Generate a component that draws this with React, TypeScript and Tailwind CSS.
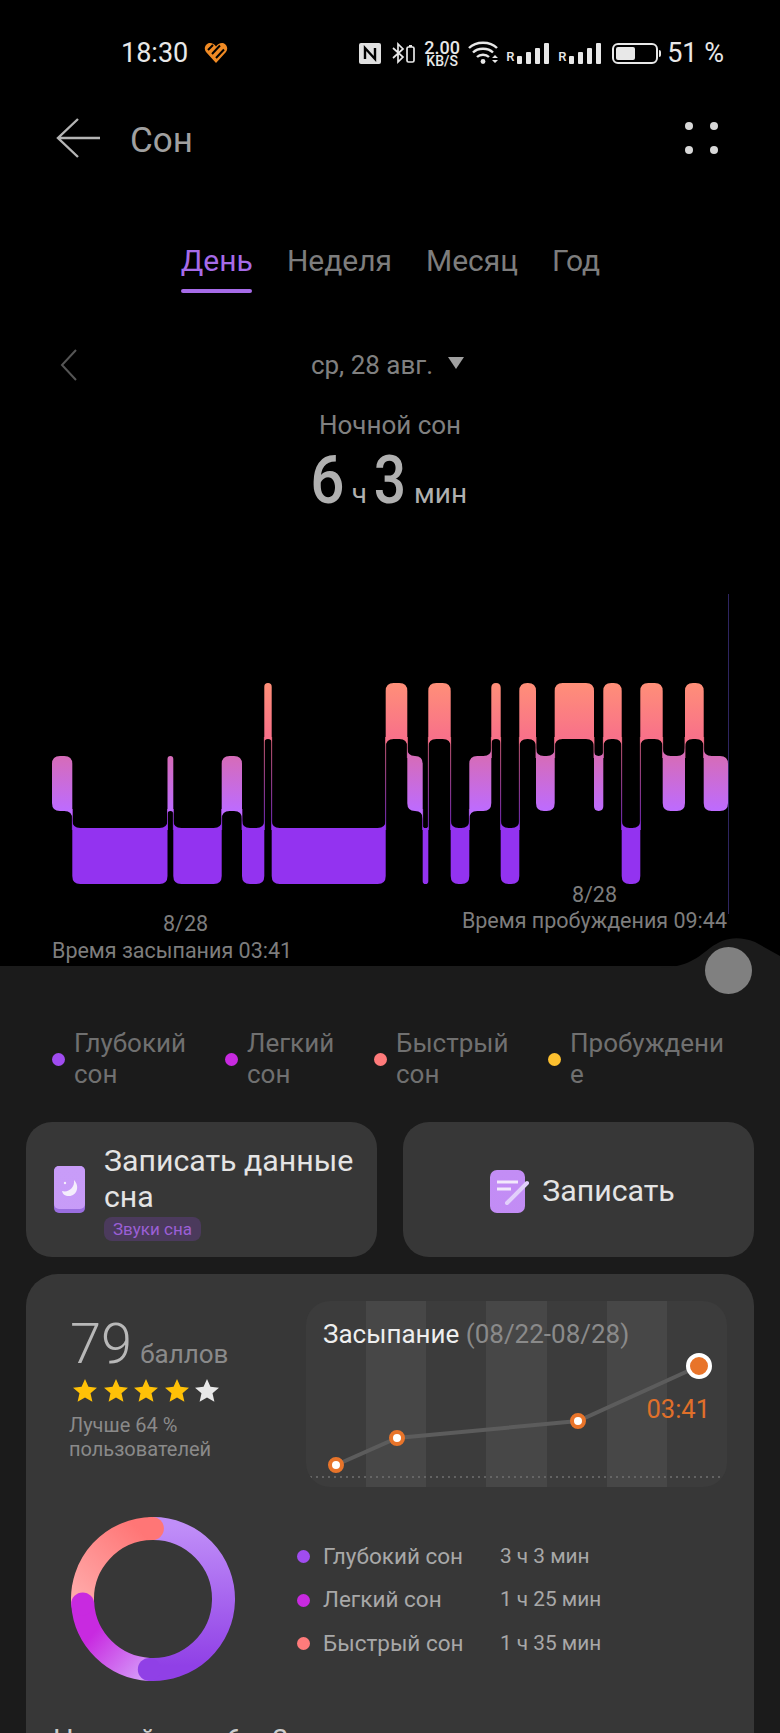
type Level = 'rem' | 'light' | 'deep';

const LEVELS: Record<Level, { top: number; bottom: number; fill: string }> = {
    rem: { top: 683, bottom: 739, fill: 'url(#remFill)' },
    light: { top: 756, bottom: 811, fill: 'url(#lightFill)' },
    deep: { top: 828, bottom: 884, fill: '#9333f0' },
};

const RANK: Record<Level, number> = { rem: 0, light: 1, deep: 2 };

// [level, x where the stretch ends], first stretch starts at x = 52
const STAGES: ReadonlyArray<[Level, number]> = [
    ['light', 72.3], ['deep', 167.5], ['light', 173.3], ['deep', 221.7], ['light', 242], ['deep', 264.3],
    ['rem', 271.7], ['deep', 385.7], ['rem', 407.3], ['light', 422.7], ['deep', 428.3], ['rem', 450.7],
    ['deep', 469.3], ['light', 491.3], ['rem', 500.7], ['deep', 519.3], ['rem', 536], ['light', 554.7],
    ['rem', 594], ['light', 603.3], ['rem', 621.7], ['deep', 640.3], ['rem', 662.7], ['light', 685],
    ['rem', 703.7], ['light', 728],
];

function stagePath(i: number) {
    const [level, x1] = STAGES[i];
    const x0 = i === 0 ? 52 : STAGES[i - 1][1];
    const { top, bottom } = LEVELS[level];
    const w = x1 - x0;
    const r = Math.min(8, w / 2);
    const f = Math.min(8, w / 2);
    const prev = i > 0 ? STAGES[i - 1][0] : null;
    const next = i < STAGES.length - 1 ? STAGES[i + 1][0] : null;
    const upL = prev !== null && RANK[prev] < RANK[level];
    const downL = prev !== null && RANK[prev] > RANK[level];
    const upR = next !== null && RANK[next] < RANK[level];
    const downR = next !== null && RANK[next] > RANK[level];
    const d: string[] = [];
    // top edge, left to right
    if (upL) d.push(`M${x0} ${top - f} Q${x0} ${top} ${x0 + f} ${top}`);
    else d.push(`M${x0} ${top + r} Q${x0} ${top} ${x0 + r} ${top}`);
    if (upR) d.push(`L${x1 - f} ${top} Q${x1} ${top} ${x1} ${top - f}`);
    else d.push(`L${x1 - r} ${top} Q${x1} ${top} ${x1} ${top + r}`);
    // bottom edge, right to left
    if (downR) d.push(`L${x1} ${bottom + f} Q${x1} ${bottom} ${x1 - f} ${bottom}`);
    else d.push(`L${x1} ${bottom - r} Q${x1} ${bottom} ${x1 - r} ${bottom}`);
    if (downL) d.push(`L${x0 + f} ${bottom} Q${x0} ${bottom} ${x0} ${bottom + f}`);
    else d.push(`L${x0 + r} ${bottom} Q${x0} ${bottom} ${x0} ${bottom - r}`);
    d.push('Z');
    return d.join(' ');
}

function SleepChart() {
    return (
        <svg width={780} height={400} viewBox="0 560 780 400" className="block">
            <defs>
                <linearGradient id="remFill" x1="0" y1="683" x2="0" y2="739" gradientUnits="userSpaceOnUse">
                    <stop offset="0" stopColor="#ff8f78" />
                    <stop offset="1" stopColor="#f8708a" />
                </linearGradient>
                <linearGradient id="lightFill" x1="0" y1="756" x2="0" y2="811" gradientUnits="userSpaceOnUse">
                    <stop offset="0" stopColor="#d66cb8" />
                    <stop offset="1" stopColor="#bd6bff" />
                </linearGradient>
                <linearGradient id="linkFill" x1="0" y1="739" x2="0" y2="828" gradientUnits="userSpaceOnUse">
                    <stop offset="0" stopColor="#f8708a" />
                    <stop offset="1" stopColor="#9333f0" />
                </linearGradient>
            </defs>
            <rect x={728} y={594} width={1} height={320} fill="#2e2560" />
            {STAGES.slice(0, -1).map(([level, x], i) => {
                const other = STAGES[i + 1][0];
                const a = RANK[level] < RANK[other] ? LEVELS[level] : LEVELS[other];
                const b = RANK[level] < RANK[other] ? LEVELS[other] : LEVELS[level];
                return <rect key={x} x={x - 0.4} y={a.bottom - 2} width={0.8} height={b.top - a.bottom + 4} fill="url(#linkFill)" />;
            })}
            {STAGES.map(([level, x], i) => (
                <path key={x} d={stagePath(i)} fill={LEVELS[level].fill} />
            ))}
        </svg>
    );
}

function polar(angle: number) {
    const a = ((angle - 90) * Math.PI) / 180;
    return { x: 82 + 70.5 * Math.cos(a), y: 83 + 70.5 * Math.sin(a) };
}

function arc(from: number, to: number) {
    const p = polar(from);
    const q = polar(to);
    return `M${p.x} ${p.y} A70.5 70.5 0 ${to - from > 180 ? 1 : 0} 1 ${q.x} ${q.y}`;
}

function Donut() {
    const capDeep = polar(183);
    const capLight = polar(266);
    const capRem = polar(359.5);
    return (
        <svg width={165} height={166} viewBox="0 0 165 166" className="shrink-0">
            <defs>
                <linearGradient id="ringDeep" x1="0" y1="10" x2="0" y2="150" gradientUnits="userSpaceOnUse">
                    <stop offset="0" stopColor="#c08ef8" />
                    <stop offset="1" stopColor="#9040e6" />
                </linearGradient>
                <linearGradient id="ringLight" x1="70" y1="160" x2="22" y2="118" gradientUnits="userSpaceOnUse">
                    <stop offset="0" stopColor="#d496f8" />
                    <stop offset="1" stopColor="#c82ae0" />
                </linearGradient>
                <linearGradient id="ringRem" x1="5" y1="85" x2="70" y2="15" gradientUnits="userSpaceOnUse">
                    <stop offset="0" stopColor="#ffabab" />
                    <stop offset="1" stopColor="#ff7676" />
                </linearGradient>
            </defs>
            <g fill="none" strokeWidth={23}>
                <path d={arc(0, 183)} stroke="url(#ringDeep)" />
                <path d={arc(183, 266)} stroke="url(#ringLight)" />
                <path d={arc(266, 359.5)} stroke="url(#ringRem)" />
            </g>
            <circle cx={capDeep.x} cy={capDeep.y} r={11.5} fill="#9040e6" />
            <circle cx={capLight.x} cy={capLight.y} r={11.5} fill="#c82ae0" />
            <circle cx={capRem.x} cy={capRem.y} r={11.5} fill="#ff7676" />
        </svg>
    );
}

function SignalBars() {
    return (
        <div className="flex items-end gap-[4px]">
            <span className="w-[9px] text-[13px] leading-[14px] font-medium text-[#e8e8e8]">R</span>
            <span className="ml-[-2px] h-[8px] w-[5px] rounded-[1px] bg-[#e8e8e8]" />
            <span className="h-[12px] w-[5px] rounded-[1px] bg-[#e8e8e8]" />
            <span className="h-[16px] w-[5px] rounded-[1px] bg-[#e8e8e8]" />
            <span className="h-[21px] w-[5px] rounded-[1px] bg-[#e8e8e8]" />
        </div>
    );
}

function StatusBar() {
    return (
        <div className="flex h-[105px] items-center pt-[1px] pr-[56px] pl-[121px] text-[#e8e8e8]">
            <span className="text-[27px] leading-none">18:30</span>
            <svg width={24} height={20} viewBox="0 0 24 20" className="ml-[16px]">
                <path d="M12 20 L2 9 C-1 5 2 0 6 0 C8.500 0 10.500 1.500 12 3.500 C13.500 1.500 15.500 0 18 0 C22 0 25 5 22 9 Z" fill="#f08a24" />
                <path d="M4 7 L9 2 M8 11 L16 2.500 M12 15 L20 6.500" stroke="#000" strokeWidth={2} />
            </svg>
            <div className="ml-auto flex items-center">
                <svg width={22} height={21} viewBox="0 0 22 21">
                    <rect width={22} height={21} rx={2} fill="#e0e0e0" />
                    <path d="M6 16 V5 L16 16 V5" fill="none" stroke="#000" strokeWidth={2.400} />
                </svg>
                <svg width={24} height={24} viewBox="0 0 24 24" className="ml-[11px]">
                    <path d="M1 7 L11 16 L6 21 V3 L11 8 L1 17" fill="none" stroke="#e8e8e8" strokeWidth={1.700} />
                    <rect x={15} y={6} width={7} height={15} rx={1.500} fill="none" stroke="#e8e8e8" strokeWidth={1.700} />
                    <rect x={17} y={4} width={3} height={2} fill="#e8e8e8" />
                </svg>
                <div className="ml-[8px] flex w-[36px] flex-col items-center font-medium">
                    <span className="text-[18px] leading-[15px]">2.00</span>
                    <span className="text-[14px] leading-[12px]">KB/S</span>
                </div>
                <svg width={31} height={24} viewBox="0 0 31 24" className="ml-[8px]">
                    <g fill="none" stroke="#e8e8e8" strokeWidth={2.400}>
                        <path d="M1 7 C8 0 22 0 29 7" />
                        <path d="M5 11.500 C10 6.500 20 6.500 25 11.500" />
                        <path d="M9 16 C12 13 18 13 21 16" />
                    </g>
                    <circle cx={15} cy={20.500} r={2.400} fill="#e8e8e8" />
                    <path d="M24 17 L27 14 L30 17 Z M24 19 L30 19 L27 22 Z" fill="#e8e8e8" />
                </svg>
                <div className="ml-[7px]">
                    <SignalBars />
                </div>
                <div className="ml-[9px]">
                    <SignalBars />
                </div>
                <div className="ml-[11px] flex items-center">
                    <div className="flex h-[21px] w-[46px] items-center rounded-[6px] border-2 border-[#e8e8e8] p-[2px]">
                        <div className="h-full w-[19px] rounded-[2px] bg-[#e8e8e8]" />
                    </div>
                    <div className="ml-[1px] h-[7px] w-[2px] rounded-r-sm bg-[#e8e8e8]" />
                </div>
                <span className="ml-[6px] text-[27px] leading-none">51 %</span>
            </div>
        </div>
    );
}

function Legend({ color, label }: { color: string; label: React.ReactNode }) {
    return (
        <div className="flex items-center">
            <span className={`size-[13px] shrink-0 rounded-full ${color}`} />
            <span className="ml-[9px] text-[26px] leading-[31px] text-[#707070]">{label}</span>
        </div>
    );
}

function Star({ color }: { color: string }) {
    return (
        <svg width={26} height={25} viewBox="0 0 24 24">
            <path d="M12 1 L15.300 8.500 L23.500 9.300 L17.300 14.700 L19.100 22.800 L12 18.600 L4.900 22.800 L6.700 14.700 L0.500 9.300 L8.700 8.500 Z" fill={color} />
        </svg>
    );
}

function Phase({ color, label, value }: { color: string; label: string; value: string }) {
    return (
        <div className="flex h-[43.500px] items-center">
            <span className={`size-[13px] rounded-full ${color}`} />
            <span className="ml-[13px] w-[177px] text-[22.500px] text-[#a8a8a8]">{label}</span>
            <span className="text-[20.800px] text-[#a8a8a8]">{value}</span>
        </div>
    );
}

export default function App() {
    return (
        <div className="relative h-[1733px] w-[780px] overflow-hidden bg-black font-['Roboto',sans-serif]">
            <StatusBar />

            {/* Title bar */}
            <div className="flex h-[66px] items-center pr-[62px] pl-[56px]">
                <svg width={44} height={40} viewBox="0 0 44 40" fill="none" stroke="#b5b5b5" strokeWidth={2.400} className="mt-[-1px]">
                    <path d="M22 1 L2 20 L22 39 M2 20 H44" />
                </svg>
                <span className="mt-[4px] ml-[30px] text-[35px] leading-none text-[#a0a0a0]">Сон</span>
                <div className="ml-auto grid grid-cols-2 gap-x-[17px] gap-y-[16px]">
                    <span className="size-[8px] rounded-full bg-[#d8d8d8]" />
                    <span className="size-[8px] rounded-full bg-[#d8d8d8]" />
                    <span className="size-[8px] rounded-full bg-[#d8d8d8]" />
                    <span className="size-[8px] rounded-full bg-[#d8d8d8]" />
                </div>
            </div>

            {/* Tabs */}
            <div className="mt-[70px] flex justify-center gap-[34px] pl-[1px] text-[30px] leading-[40px] text-[#7d7d7d]">
                <div className="flex flex-col items-center text-[#a66be8]">
                    <span>День</span>
                    <span className="mt-[8px] h-[4px] w-[71px] rounded-full bg-[#a66be8]" />
                </div>
                <span>Неделя</span>
                <span>Месяц</span>
                <span>Год</span>
            </div>

            {/* Date picker */}
            <div className="relative mt-[52px] flex h-[40px] items-center justify-center pr-[5px] text-[26px] text-[#808080]">
                <svg width={17} height={32} viewBox="0 0 17 32" fill="none" stroke="#555555" strokeWidth={2} className="absolute top-[4px] left-[60px]">
                    <path d="M16 1 L2 16 L16 31" />
                </svg>
                <span>ср, 28 авг.</span>
                <span className="mt-[-4px] ml-[15px] h-0 w-0 border-x-[8px] border-t-[12px] border-x-transparent border-t-[#a0a0a0]" />
            </div>

            <div className="mt-[23px] text-center text-[26px] leading-[34px] text-[#808080]">Ночной сон</div>
            <div className="mt-[6px] flex items-baseline justify-center text-[#b0b0b0]">
                <span className="flex w-[29px] scale-x-[.9] justify-center text-[67px] leading-[64px] font-medium">6</span>
                <span className="ml-[10px] text-[28px] leading-none">ч</span>
                <span className="ml-[10px] flex w-[26px] scale-x-[.85] justify-center text-[67px] leading-[64px] font-medium">3</span>
                <span className="ml-[11px] text-[28px] leading-none">мин</span>
            </div>

            {/* Hypnogram */}
            <div className="absolute top-[560px] left-0">
                <SleepChart />
            </div>
            <div className="absolute top-[882px] right-[53px] text-center text-[21.500px] leading-[26px] text-[#7d7d7d]">
                <div>8/28</div>
                <div>Время пробуждения 09:44</div>
            </div>
            <div className="absolute top-[910px] left-[52px] text-[21.500px] leading-[27px] text-[#7d7d7d]">
                <div className="pl-[27px] text-center">8/28</div>
                <div>Время засыпания 03:41</div>
            </div>

            {/* Bottom sheet */}
            <div className="absolute inset-x-0 top-[966px] bottom-0 bg-[#1b1b1b] px-[26px]">
                <svg width={125} height={32} viewBox="0 0 125 32" className="absolute top-[-30px] right-0">
                    <path d="M0 32 C30 32 40 24 55 12 C68 2 82 -1 100 6 L125 20 V32 Z" fill="#1b1b1b" />
                </svg>
                <span className="absolute top-[-19px] left-[705px] size-[47px] rounded-full bg-[#808080]" />

                <div className="grid grid-cols-[173px_149px_174px_1fr] pt-[62px] pl-[26px]">
                    <Legend color="bg-[#a04cf0]" label={<>Глубокий<br />сон</>} />
                    <Legend color="bg-[#c82ae0]" label={<>Легкий<br />сон</>} />
                    <Legend color="bg-[#ff7b7b]" label={<>Быстрый<br />сон</>} />
                    <Legend color="bg-[#fdc02f]" label={<>Пробуждени<br />е</>} />
                </div>

                <div className="mt-[32px] grid grid-cols-2 gap-[26px]">
                    <div className="flex h-[135px] items-center rounded-[26px] bg-[#373737] pl-[28px]">
                        <svg width={31} height={47} viewBox="0 0 31 47" className="shrink-0">
                            <defs>
                                <linearGradient id="phoneFill" x1="0" y1="0" x2="0" y2="47">
                                    <stop offset="0" stopColor="#c89cf8" />
                                    <stop offset="1" stopColor="#a87cf0" />
                                </linearGradient>
                            </defs>
                            <rect width={31} height={47} rx={5} fill="#9a6ee0" />
                            <rect width={31} height={43} rx={5} fill="url(#phoneFill)" />
                            <path d="M20 14 C26 20 23 30 15 30 C11 30 8.500 28 8 25 C14 27 21 22 20 14 Z" fill="#f4eefc" />
                            <circle cx={11} cy={17} r={1.200} fill="#f4eefc" />
                        </svg>
                        <div className="ml-[19px] pt-[4px]">
                            <div className="text-[30.300px] leading-[36px] text-[#e4e4e4]">Записать данные<br />сна</div>
                            <div className="mt-[2px] w-fit rounded-[8px] bg-[#4b3a5c] px-[9px] text-[17px] leading-[24px] text-[#9b5fd5]">Звуки сна</div>
                        </div>
                    </div>
                    <div className="flex h-[135px] items-center justify-center rounded-[26px] bg-[#373737] pt-[4px] pl-[8px]">
                        <svg width={39} height={43} viewBox="0 0 39 43">
                            <defs>
                                <linearGradient id="noteFill" x1="0" y1="0" x2="0" y2="43">
                                    <stop offset="0" stopColor="#c38df5" />
                                    <stop offset="1" stopColor="#9e6fe8" />
                                </linearGradient>
                            </defs>
                            <rect width={35} height={43} rx={7} fill="url(#noteFill)" />
                            <path d="M7 12 H28 M7 19 H21" stroke="#f2e8fc" strokeWidth={3} />
                            <path d="M37 13 L17 33" stroke="#e2cffb" strokeWidth={4} strokeLinecap="round" />
                        </svg>
                        <span className="ml-[13px] text-[30.300px] leading-none text-[#e4e4e4]">Записать</span>
                    </div>
                </div>

                {/* Score card */}
                <div className="mt-[17px] h-[600px] rounded-[32px] bg-[#373737] px-[27px] pt-[27px]">
                    <div className="flex">
                        <div className="w-[253px] pt-[12px] pl-[17px]">
                            <div className="flex items-baseline">
                                <span className="text-[56px] leading-[62px] font-light text-[#b8b8b8]">79</span>
                                <span className="ml-[8px] text-[26px] text-[#8a8a8a]">баллов</span>
                            </div>
                            <div className="mt-[3px] ml-[2px] flex gap-[4.500px]">
                                <Star color="#ffc107" />
                                <Star color="#ffc107" />
                                <Star color="#ffc107" />
                                <Star color="#ffc107" />
                                <Star color="#e8e8e8" />
                            </div>
                            <div className="mt-[10px] ml-[-1px] text-[20px] leading-[24px] text-[#8a8a8a]">Лучше 64 %<br />пользователей</div>
                        </div>
                        <div className="relative h-[186px] w-[421px] overflow-hidden rounded-[24px] bg-[#3c3c3c]">
                            <div className="absolute inset-0 grid grid-cols-7">
                                <span />
                                <span className="bg-[#474747]" />
                                <span />
                                <span className="bg-[#474747]" />
                                <span />
                                <span className="bg-[#474747]" />
                                <span />
                            </div>
                            <div className="relative pt-[18px] pl-[17px] text-[26px] leading-[30px]">
                                <span className="text-[#eeeeee]">Засыпание </span>
                                <span className="text-[#8a8a8a]">(08/22-08/28)</span>
                            </div>
                            <svg width={421} height={186} viewBox="0 0 421 186" className="absolute inset-0">
                                <line x1={4} y1={176} x2={417} y2={176} stroke="#707070" strokeWidth={1.500} strokeDasharray="2 4" />
                                <polyline points="30,164 91,137 272,120 393,65" fill="none" stroke="#5c5c5c" strokeWidth={4} />
                                <circle cx={30} cy={164} r={6} fill="#fff" stroke="#e8742a" strokeWidth={4} />
                                <circle cx={91} cy={137} r={6} fill="#fff" stroke="#e8742a" strokeWidth={4} />
                                <circle cx={272} cy={120} r={6} fill="#fff" stroke="#e8742a" strokeWidth={4} />
                                <circle cx={393} cy={65} r={11} fill="#e8742a" stroke="#fff" strokeWidth={4} />
                            </svg>
                            <span className="absolute top-[93px] right-[17px] text-[25.500px] leading-[30px] text-[#e0702a]">03:41</span>
                        </div>
                    </div>

                    <div className="mt-[29px] flex items-center pl-[18px]">
                        <Donut />
                        <div className="ml-[61px] pt-[2px]">
                            <Phase color="bg-[#a04cf0]" label="Глубокий сон" value="3 ч 3 мин" />
                            <Phase color="bg-[#c82ae0]" label="Легкий сон" value="1 ч 25 мин" />
                            <Phase color="bg-[#ff7b7b]" label="Быстрый сон" value="1 ч 35 мин" />
                        </div>
                    </div>

                    <div className="mt-[41px] text-[29px] leading-[34px] text-[#cccccc]">Ночной сон: 6 ч 3 мин</div>
                </div>
            </div>
        </div>
    );
}
